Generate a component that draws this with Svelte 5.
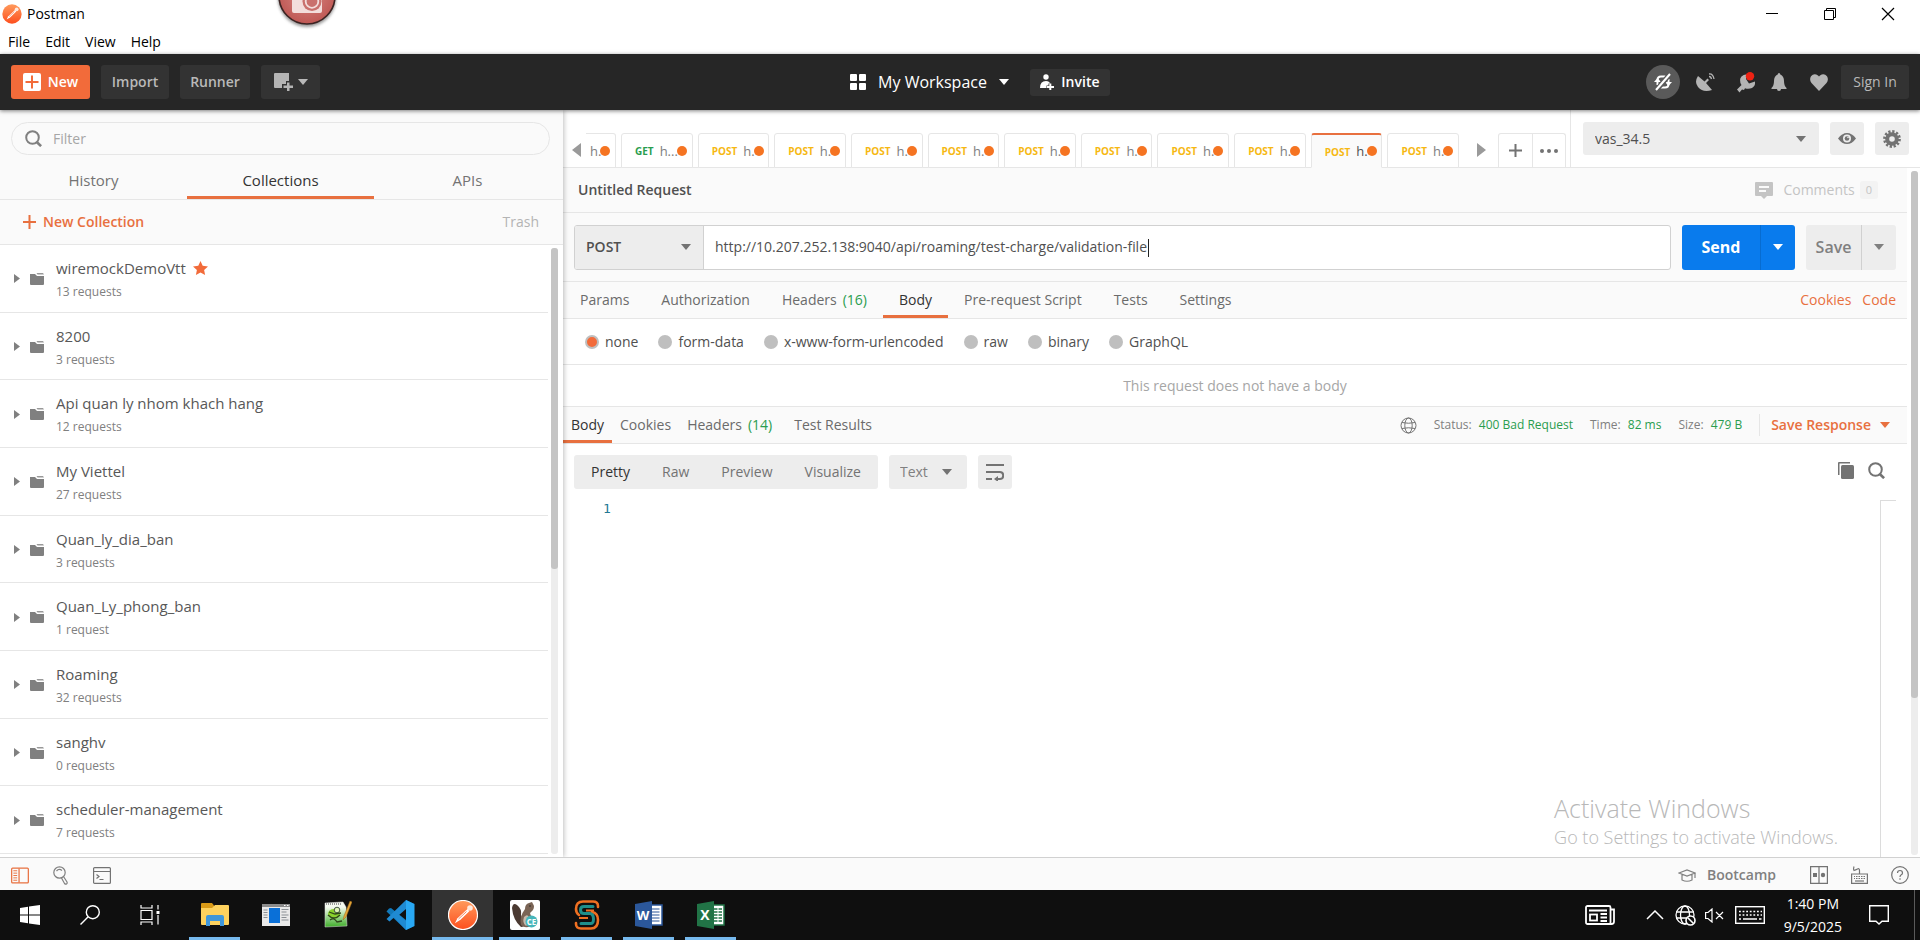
<script>
  const menus = ['File', 'Edit', 'View', 'Help'];
  const collections = [
    { name: 'wiremockDemoVtt', count: '13 requests', starred: true },
    { name: '8200', count: '3 requests' },
    { name: 'Api quan ly nhom khach hang', count: '12 requests' },
    { name: 'My Viettel', count: '27 requests' },
    { name: 'Quan_ly_dia_ban', count: '3 requests' },
    { name: 'Quan_Ly_phong_ban', count: '1 request' },
    { name: 'Roaming', count: '32 requests' },
    { name: 'sanghv', count: '0 requests' },
    { name: 'scheduler-management', count: '7 requests' }
  ];
  const openTabs = [
    { method: 'GET', title: 'h...' },
    ...Array.from({ length: 10 }, (_, i) => ({ method: 'POST', title: 'h.', active: i === 8 }))
  ];
  const requestTabs = [
    { label: 'Params' },
    { label: 'Authorization' },
    { label: 'Headers', count: '(16)' },
    { label: 'Body', active: true },
    { label: 'Pre-request Script' },
    { label: 'Tests' },
    { label: 'Settings' }
  ];
  const bodyTypes = ['none', 'form-data', 'x-www-form-urlencoded', 'raw', 'binary', 'GraphQL'];
  let bodyType = $state('none');
  let url = $state('http://10.207.252.138:9040/api/roaming/test-charge/validation-file');
</script>

{#snippet caret()}
  <svg class="caret" width="10" height="6" viewBox="0 0 10 6" aria-hidden="true"><path d="M0 0h10L5 6z" fill="currentColor" /></svg>
{/snippet}

{#snippet magnifier()}
  <svg width="17" height="17" viewBox="0 0 17 17" fill="none" stroke="currentColor" stroke-width="2" aria-hidden="true"><circle cx="7.5" cy="7.5" r="6.3" /><path d="M11.5 11.8l4.6 4.4" stroke-width="2.6" /></svg>
{/snippet}

{#snippet postmanLogo(size)}
  <svg width={size} height={size} viewBox="0 0 30 30" aria-hidden="true">
    <defs><linearGradient id="pm{size}" x1="0" y1="0" x2="0" y2="1"><stop offset="0" stop-color="#ff9a5c" /><stop offset="1" stop-color="#fd4f1e" /></linearGradient></defs>
    <circle cx="15" cy="15" r="14.5" fill="url(#pm{size})" stroke="#fff" stroke-width={size > 24 ? 1.2 : 0} />
    <circle cx="22" cy="8" r="2.8" fill="#ffe9dd" />
    <path d="M19.5 9l1.8 2.2-8.8 8.6-5.6 3.4 2.6-5z" fill="#fff" />
    <path d="M18.5 11.5l-8 7.5" stroke="#f26b3a" stroke-width=".8" />
  </svg>
{/snippet}

<div class="screen">
  <header class="titlebar">
    <div class="title-row">
      {@render postmanLogo(20)}
      <span class="app-name">Postman</span>
      <div class="win-controls">
        <button aria-label="Minimize"><svg width="14" height="14" viewBox="0 0 14 14"><path d="M1 6.5h12" stroke="#000" /></svg></button>
        <button aria-label="Restore"><svg width="14" height="14" viewBox="0 0 14 14" fill="none" stroke="#000"><path d="M1.500 3.500h9v9h-9zM3.500 3.500v-2h9v9h-2" /></svg></button>
        <button aria-label="Close"><svg width="14" height="14" viewBox="0 0 14 14" stroke="#000" stroke-width="1.2"><path d="M1 1l12 12M13 1L1 13" /></svg></button>
      </div>
    </div>
    <nav class="menus">
      {#each menus as m}<button>{m}</button>{/each}
    </nav>
    <svg class="recorder" width="64" height="34" viewBox="0 0 64 34" aria-hidden="true">
      <defs><radialGradient id="rec" cx=".5" cy=".45" r=".6"><stop offset="0" stop-color="#d98985" /><stop offset="1" stop-color="#bd5450" /></radialGradient>
      <filter id="soft" x="-20%" y="-20%" width="140%" height="150%"><feGaussianBlur stdDeviation="1.5" /></filter></defs>
      <circle cx="32" cy="-2" r="29" fill="#555" opacity=".6" filter="url(#soft)" />
      <circle cx="32" cy="-4" r="28" fill="url(#rec)" stroke="#3c2322" stroke-width="1.6" />
      <path d="M17 -8h30v19q0 2-2 2H19q-2 0-2-2z" fill="#f3dedc" />
      <circle cx="37" cy="1.500" r="9.500" fill="#c9716d" /><circle cx="37" cy="1.500" r="6.300" fill="none" stroke="#f3dedc" stroke-width="1.800" />
    </svg>
  </header>

  <div class="toolbar">
    <div class="tools">
      <button class="btn new"><svg width="18" height="18" viewBox="0 0 18 18"><rect width="18" height="18" rx="2" fill="#fff" /><path d="M9 2.500v13M2.500 9h13" stroke="#f26b3a" stroke-width="2" /></svg>New</button>
      <button class="btn import">Import</button>
      <button class="btn runner">Runner</button>
      <button class="btn window" aria-label="New window"><svg width="19" height="18" viewBox="0 0 19 18" fill="#b4b4b4"><path d="M1 0h14v8h-3v3H8v4H1q-1 0-1-1V1q0-1 1-1z" /><path d="M13 9.500h2.500v3H19V15h-3.500v3.500H13V15H9.500v-2.500H13z" /></svg>{@render caret()}</button>
    </div>
    <div class="workspace">
      <button class="ws-name"><svg width="16" height="16" viewBox="0 0 16 16" fill="#fff"><rect width="7" height="7" rx="1" /><rect x="9" width="7" height="7" rx="1" /><rect y="9" width="7" height="7" rx="1" /><rect x="9" y="9" width="7" height="7" rx="1" /></svg><span>My Workspace</span>{@render caret()}</button>
      <button class="btn invite"><svg width="15" height="16" viewBox="0 0 15 16" fill="#fff"><circle cx="6" cy="3" r="2.700" /><path d="M0 14q0-7 6-7 3.500 0 4 2.500H8.500V11.500H6.500V14z" /><path d="M9.300 9.500h2V12H14v2h-2.700v2.300h-2V14H7v-2h2.300z" /></svg>Invite</button>
    </div>
    <div class="account">
      <button class="sync" aria-label="Sync off"><svg width="20" height="20" viewBox="0 0 20 20" fill="none" stroke="#fff" stroke-width="2"><path d="M4.500 13V8q0-3.500 3.500-3.500h4.500M15.500 7v5q0 3.500-3.500 3.500H7.500" /><path d="M1 10l3.500-4L8 10zM12 10l3.500 4L19 10z" fill="#fff" stroke="none" /><path d="M3 18.500L17.500 1.500" stroke="#5a5a5a" stroke-width="5" /><path d="M3 18L17 2" /></svg></button>
      <button class="plain dish" aria-label="Capture"><svg width="20" height="19" viewBox="0 0 20 19" fill="#b4b4b4"><path d="M2 3Q-2 9 2 14q5 6 14 3L10 10l3-3-1.500-1.500L8.500 8.500z" /><path d="M13 1q4-.5 5 5M13 3.500q2 0 2.500 2.500" fill="none" stroke="#b4b4b4" stroke-width="1.300" /></svg></button>
      <button class="plain wrench" aria-label="Settings"><svg width="20" height="21" viewBox="0 0 20 21"><path d="M1 17.500L5.500 13Q2.500 8 5.500 4.500 8 2 11 2.500L10 7l3 4.500 6-2q.5 4.500-3 6.500-3.500 1.500-7 .3L8 18l-2-.5L3.500 20.500z" fill="#b4b4b4" /><circle cx="14" cy="4.200" r="4.200" fill="#ed2213" /></svg></button>
      <button class="plain bell" aria-label="Notifications"><svg width="16" height="18" viewBox="0 0 16 18" fill="#b4b4b4"><path d="M8 0q1.200 0 1.300 1.500Q13 3 13 8q0 5 2.500 7v1H.5v-1Q3 13 3 8q0-5 3.700-6.500Q6.800 0 8 0z" /><path d="M6 16h4q0 2-2 2t-2-2z" /></svg></button>
      <button class="plain heart" aria-label="Favorites"><svg width="18" height="17" viewBox="0 0 18 17" fill="#b4b4b4"><path d="M9 17L1.500 9Q-1 5.500 1 2.300 4-1.500 8 1.500L9 2.500l1-1q4-3 7 .8 2 3.200-.5 6.700z" /></svg></button>
      <button class="btn signin">Sign In</button>
    </div>
  </div>

  <div class="main">
    <aside class="sidebar">
      <div class="filter-wrap">
        <label class="filter">{@render magnifier()}<input type="text" placeholder="Filter" aria-label="Filter" /></label>
      </div>
      <nav class="side-tabs">
        <button>History</button><button class="active">Collections</button><button>APIs</button>
      </nav>
      <div class="side-actions">
        <button class="new-col"><svg width="13" height="14" viewBox="0 0 13 14"><path d="M6.500 0v14M0 7h13" stroke="#e8703f" stroke-width="2" /></svg>New Collection</button>
        <button class="trash">Trash</button>
      </div>
      <div class="list-wrap">
        <ul class="list">
          {#each collections as c}
            <li>
              <svg class="tri" width="6" height="9" viewBox="0 0 6 9"><path d="M0 0l6 4.500L0 9z" fill="#808080" /></svg>
              <svg class="folder" width="14" height="12" viewBox="0 0 14 12" fill="#808080"><path d="M0 1h5l2 2h7v8q0 1-1 1H1q-1 0-1-1z" /><path d="M6.500 0H13l1 1.500H7.500z" opacity=".8" /></svg>
              <div class="info">
                <div class="name">{c.name}{#if c.starred}<svg width="15" height="14" viewBox="0 0 15 14"><path d="M7.500 0l2.200 4.700 5.300.7-3.900 3.500 1 5.100-4.600-2.500L2.900 14l1-5.100L0 5.400l5.300-.7z" fill="#f26b3a" /></svg>{/if}</div>
                <div class="count">{c.count}</div>
              </div>
            </li>
          {/each}
        </ul>
        <div class="track"><div class="thumb side-thumb"></div></div>
      </div>
    </aside>

    <section class="work">
      <div class="tabbar">
        <div class="tabs-area">
          <button class="arrow left" aria-label="Previous tabs"><svg width="9" height="14" viewBox="0 0 9 14"><path d="M9 0v14L0 7z" fill="#9a9a9a" /></svg></button>
          <div class="strip">
            <button class="tab cut"><span class="tab-title">h.</span><i class="dot"></i></button>
            {#each openTabs as t}
              <button class="tab" class:active={t.active} class:get={t.method === 'GET'}><b>{t.method}</b><span class="tab-title">{t.title}</span><i class="dot"></i></button>
            {/each}
          </div>
          <button class="arrow right" aria-label="Next tabs"><svg width="9" height="14" viewBox="0 0 9 14"><path d="M0 0v14l9-7z" fill="#9a9a9a" /></svg></button>
          <div class="tab-tools">
            <button aria-label="Add tab"><svg width="13" height="13" viewBox="0 0 13 13"><path d="M6.500 0v13M0 6.500h13" stroke="#737373" stroke-width="2" /></svg></button>
            <button aria-label="More"><svg width="18" height="4" viewBox="0 0 18 4" fill="#737373"><circle cx="2" cy="2" r="2" /><circle cx="9" cy="2" r="2" /><circle cx="16" cy="2" r="2" /></svg></button>
          </div>
        </div>
        <div class="env">
          <div class="picker env-picker"><select aria-label="Environment"><option>vas_34.5</option></select>{@render caret()}</div>
          <button class="sq" aria-label="Quick look"><svg width="18" height="11" viewBox="0 0 18 11"><path d="M0 5.500Q4 0 9 0t9 5.500Q14 11 9 11T0 5.500z" fill="#737373" /><circle cx="9" cy="5.500" r="4" fill="#ededed" /><circle cx="9" cy="5.500" r="2.300" fill="#737373" /><circle cx="10" cy="4.500" r=".8" fill="#ededed" /></svg></button>
          <button class="sq" aria-label="Manage environments"><svg width="18" height="18" viewBox="0 0 18 18"><circle cx="9" cy="9" r="7.400" fill="none" stroke="#737373" stroke-width="3" stroke-dasharray="2.2 1.675" /><circle cx="9" cy="9" r="4.800" fill="none" stroke="#737373" stroke-width="4" /></svg></button>
        </div>
      </div>

      <div class="body-wrap">
        <div class="content">
          <div class="req-head">
            <h1>Untitled Request</h1>
            <button class="comments"><svg width="18" height="17" viewBox="0 0 18 17"><path d="M1 0h16q1 0 1 1v12q0 1-1 1h-5l-3 3-3-3H1q-1 0-1-1V1q0-1 1-1z" fill="#c4c4c4" /><path d="M4 5h10M4 9h7" stroke="#fafafa" stroke-width="1.800" /></svg>Comments <span class="badge">0</span></button>
          </div>
          <div class="req-line">
            <div class="url-group">
              <div class="picker method"><select aria-label="Method"><option>POST</option></select>{@render caret()}</div>
              <div class="url"><input type="text" aria-label="Request URL" bind:value={url} /><span class="cursor"></span></div>
            </div>
            <div class="split send"><button>Send</button><button class="more" aria-label="Send options">{@render caret()}</button></div>
            <div class="split save"><button>Save</button><button class="more" aria-label="Save options">{@render caret()}</button></div>
          </div>
          <nav class="req-tabs">
            {#each requestTabs as t}
              <button class:active={t.active}>{t.label}{#if t.count}<span class="green">{t.count}</span>{/if}</button>
            {/each}
            <div class="links"><a href="#cookies">Cookies</a><a href="#code">Code</a></div>
          </nav>
          <div class="types">
            {#each bodyTypes as b}
              <label><input type="radio" name="body-type" value={b} bind:group={bodyType} />{b}</label>
            {/each}
          </div>
          <p class="no-body">This request does not have a body</p>
          <div class="resp-tabs">
            <button class="active">Body</button><button>Cookies</button><button>Headers<span class="green">(14)</span></button><button class="results">Test Results</button>
            <div class="meta">
              <svg class="globe" width="17" height="17" viewBox="0 0 17 17" fill="none" stroke="#737373"><circle cx="8.500" cy="8.500" r="7.500" /><ellipse cx="8.500" cy="8.500" rx="3.700" ry="7.500" /><path d="M2 5.500q6.500 1.500 13 0M2 11.500q6.500-1.500 13 0" /></svg>
              <span>Status: <em>400 Bad Request</em></span>
              <span>Time: <em>82 ms</em></span>
              <span>Size: <em>479 B</em></span>
              <button class="save-resp">Save Response{@render caret()}</button>
            </div>
          </div>
          <div class="view-bar">
            <div class="modes"><button class="active">Pretty</button><button>Raw</button><button>Preview</button><button>Visualize</button></div>
            <div class="picker fmt"><select aria-label="Format"><option>Text</option></select>{@render caret()}</div>
            <button class="sq wrap" aria-label="Wrap lines"><svg width="18" height="18" viewBox="0 0 18 18" fill="none" stroke="#737373" stroke-width="2"><path d="M0 2h18M0 9h14q3.200 0 3.200 3.500T14 16h-3M0 16h6" /><path d="M8 16l4-3v6z" fill="#737373" stroke="none" /></svg></button>
            <div class="view-tools">
              <button class="plain" aria-label="Copy"><svg width="16" height="17" viewBox="0 0 16 17" fill="#737373"><path d="M0 1q0-1 1-1h11v1.500H1.500V13H0z" /><rect x="3" y="3" width="13" height="14" rx="1.500" /></svg></button>
              <button class="plain" aria-label="Search">{@render magnifier()}</button>
            </div>
          </div>
          <div class="editor"><code>1</code><div class="ruler"></div></div>
        </div>
        <div class="track right-track"><div class="thumb right-thumb"></div></div>
      </div>
      <div class="watermark"><div>Activate Windows</div><p>Go to Settings to activate Windows.</p></div>
    </section>
  </div>

  <footer class="statusbar">
    <button class="plain" aria-label="Sidebar"><svg width="18" height="17" viewBox="0 0 19 17" fill="none" stroke="#e8703f"><rect x=".700" y=".700" width="17.600" height="15.600" rx="1" stroke-width="1.300" /><path d="M8.500 1v15" stroke-width="1.300" /><path d="M2.500 3.500h4M2.500 6h4M2.500 8.500h4M2.500 11h4M2.500 13.500h4" /></svg></button>
    <button class="plain" aria-label="Find"><svg width="16" height="19" viewBox="0 0 16 19" fill="none" stroke="#808080" stroke-width="1.200"><circle cx="6.500" cy="6.500" r="5.700" /><path d="M3.500 5q2.500-3 5.500-.5M8.500 12l3 5.500q1 1 2 .5 1-.8.500-2L10.500 10.500" /></svg></button>
    <button class="plain" aria-label="Console"><svg width="18" height="17" viewBox="0 0 18 17" fill="none" stroke="#737373" stroke-width="1.200"><rect x=".600" y=".600" width="16.800" height="15.800" rx="1" /><path d="M1 4.500h16M3.500 7.500L6 9.500l-2.500 2M6.500 12.500h4" /></svg></button>
    <div class="status-right">
      <button class="plain boot"><svg width="18" height="13" viewBox="0 0 18 13" fill="none" stroke="#808080" stroke-width="1.200"><path d="M1 4l8-3 8 3-8 3zM4 5.500V11q5 2.500 10 0V5.500M17 4v5" /></svg>Bootcamp</button>
      <button class="plain" aria-label="Layout"><svg width="18" height="18" viewBox="0 0 18 18" fill="none" stroke="#737373" stroke-width="1.200"><path d="M.600.600h16.800v16.800H.600zM9 1v16" /><rect x="3" y="7" width="4" height="4" fill="#737373" stroke="none" /><circle cx="13" cy="9" r="2.200" fill="#737373" stroke="none" /></svg></button>
      <button class="plain" aria-label="Shortcuts"><svg width="17" height="18" viewBox="0 0 17 18" fill="none" stroke="#737373" stroke-width="1.200"><path d="M.600 8h15.800v9.400H.600zM8.500 8V4.500Q8.500 2 6.500 3T3 4.500q-1-1 0-4M3 10.500h11M3 12.500h11" /><path d="M4 15h9" /><path d="M4 11.500h10" stroke="#fafafa" stroke-dasharray="1 1.500" stroke-width="3" /></svg></button>
      <button class="plain" aria-label="Help"><svg width="18" height="18" viewBox="0 0 18 18" fill="none" stroke="#737373" stroke-width="1.200"><circle cx="9" cy="9" r="8.300" /><path d="M6.500 7q0-2.500 2.500-2.500T11.500 7q0 1.200-1.500 2-1 .6-1 2M9 12.300v1.500" /></svg></button>
    </div>
  </footer>

  <nav class="taskbar">
    <button class="sys" aria-label="Start"><svg width="20" height="20" viewBox="0 0 20 20" fill="#fff"><path d="M0 3l8-1.200V9.500H0zM9 1.600L20 0v9.500H9zM0 10.500h8v7.700L0 17zM9 10.500h11V20L9 18.400z" /></svg></button>
    <button class="sys" aria-label="Search"><svg width="20" height="20" viewBox="0 0 20 20" fill="none" stroke="#fff" stroke-width="1.400"><circle cx="12.800" cy="7.200" r="6.500" /><path d="M8.200 11.800L.5 19.500" /></svg></button>
    <button class="sys view" aria-label="Task view"><svg width="20" height="20" viewBox="0 0 20 20" fill="none" stroke="#fff" stroke-width="1.200"><path d="M1 0v3h11V0M1 20v-3h11v3M1 5.500h11v9H1zM18 0v4.500M18 10v9.500" /><rect x="16.500" y="6" width="3" height="3" fill="#fff" stroke="none" /></svg></button>
    <button class="app open" aria-label="File Explorer"><svg width="28" height="24" viewBox="0 0 28 24"><path d="M0 1q0-1 1-1h10l2 2.500V5H0z" fill="#d99a17" /><path d="M0 5h11l3-3h13q1 0 1 1v18q0 1-1 1H1q-1 0-1-1z" fill="#fdd15d" /><path d="M5 23V14q0-2 2-2h14q2 0 2 2v9h-4v-5H9v5z" fill="#3f96d9" /></svg></button>
    <button class="app" aria-label="Window tool"><svg width="28" height="22" viewBox="0 0 28 22"><path d="M0 0h28v22H0z" fill="#e9e9e9" /><path d="M0 0h28v3H0z" fill="#8b8b8b" /><path d="M22 1.500h1.500M25 1.500h1.500" stroke="#fff" /><path d="M7 4h11v15H7z" fill="#0a70d8" /><path d="M1.500 6h4M1.500 8.500h4M1.500 11h4M1.500 13.500h4M19.500 5.500h7M19.500 8h5M19.500 11h7M19.500 13.500h5M19.500 16h7" stroke="#8a8f94" /></svg></button>
    <button class="app" aria-label="Notepad++"><svg width="28" height="28" viewBox="0 0 28 28"><defs><linearGradient id="npp" x1="0" y1="0" x2="0" y2="1"><stop offset=".2" stop-color="#f5faf0" /><stop offset="1" stop-color="#3fae2a" /></linearGradient></defs><path d="M1 2l18-1 3 5 1 19-22 1z" fill="url(#npp)" stroke="#ddd" stroke-width=".5" /><path d="M2 3h16" stroke="#999" stroke-width="2" stroke-dasharray="1 1" /><ellipse cx="10" cy="13" rx="6" ry="5" fill="#8bd22d" /><circle cx="13" cy="9" r="2.800" fill="#dff3b7" stroke="#454" /><path d="M4 14q6 6 12 0M6 19q4-3 7 2l5-1M5 11l6 2 6-1" fill="none" stroke="#30471c" stroke-width="1.300" /><path d="M19 19l1-4 6-15 2 1-6 15z" fill="#e5a53a" stroke="#9a6a18" stroke-width=".5" /></svg></button>
    <button class="app" aria-label="Visual Studio Code"><svg width="30" height="30" viewBox="0 0 30 30"><path d="M21 0l8 4v22l-8 4L1.500 11.500 4 8.500 6 8l15 12z" fill="#1179bb" /><path d="M21 30L9 17.500 4.500 21.500 1.500 19 21 0v9L14 15l7 6z" fill="#1f8ad2" /><path d="M21 0l8.500 4v22L21 30z" fill="#29a8f3" /></svg></button>
    <button class="app open current" aria-label="Postman">{@render postmanLogo(30)}</button>
    <button class="app open" aria-label="DBeaver"><svg width="30" height="30" viewBox="0 0 30 30"><rect width="30" height="30" rx="2" fill="#fff" /><path d="M2 8q1-6 5-3 5 4 4 10l3 8q1 4-3 4Q3 20 2 8z" fill="#4b3a32" /><path d="M15 9q0-5 4-6l3-1 1 2q2 2 0 6l-3 3 2 6-1 7q-6 3-10-1-2-8 4-16z" fill="#7a6455" /><path d="M14 17q4-4 5 1 0 6-3 8-4-3-2-9z" fill="#c8b8aa" /><circle cx="20" cy="6" r=".800" fill="#222" /><circle cx="21.500" cy="21.500" r="6" fill="#46b5ba" /><text x="21.500" y="24.500" text-anchor="middle" font-size="8" font-weight="700" fill="#fff" font-family="Open Sans, sans-serif">CE</text></svg></button>
    <button class="app open" aria-label="Smart terminal"><svg width="26" height="30" viewBox="0 0 26 30" fill="none"><path d="M24 7V6q0-4.500-5-4.500H9Q2 1.500 2 9q0 4 3 6M18 12q6 1 6 8 0 8.500-7 8.500H7q-5 0-5-4.500v-1" stroke="#ef7022" stroke-width="2.600" stroke-linecap="round" /><path d="M19 6.500H10Q6.500 6.500 6.500 10t3.500 3.500h6Q19.500 14 19.500 19T16 23.500H7" stroke="#1f8f8b" stroke-width="3" stroke-linecap="round" /><path d="M20 10.500H12M5 18h9" stroke="#ef7022" stroke-width="1.800" /></svg></button>
    <button class="app open" aria-label="Word"><svg width="28" height="28" viewBox="0 0 28 28"><path d="M15 4h12v20H15z" fill="#fff" stroke="#2b579a" stroke-width="1.500" /><path d="M17 8h7.500M17 11h7.500M17 14h7.500M17 17h7.500M17 20h7.500" stroke="#2b579a" stroke-width="1.200" /><path d="M0 3l17-3v28L0 25z" fill="#2b579a" /><text x="8" y="19" text-anchor="middle" font-size="13" font-weight="700" fill="#fff" font-family="Open Sans, sans-serif">W</text></svg></button>
    <button class="app open" aria-label="Excel"><svg width="28" height="28" viewBox="0 0 28 28"><path d="M15 4h12v20H15z" fill="#fff" stroke="#217346" stroke-width="1.500" /><path d="M17 8h8M17 11h8M17 14h8M17 17h8M17 20h8" stroke="#217346" stroke-width="1.500" /><path d="M21 6v16" stroke="#fff" /><path d="M0 3l17-3v28L0 25z" fill="#217346" /><text x="8" y="19" text-anchor="middle" font-size="14" font-weight="700" fill="#fff" font-family="Open Sans, sans-serif">X</text></svg></button>
    <div class="tray">
      <svg width="30" height="20" viewBox="0 0 30 20" fill="none" stroke="#fff" stroke-width="1.800"><rect x="1" y="1" width="24.500" height="18" rx="1.500" /><path d="M25.500 4.500H29v12q0 2.500-2.500 2.500h-3M4 5.500h18M15.500 9H22M15.500 12.500H22M15.500 16H22" /><rect x="5" y="9.500" width="7" height="6" /></svg>
      <svg class="up" width="18" height="10" viewBox="0 0 18 10" fill="none" stroke="#fff" stroke-width="1.500"><path d="M1 9l8-8 8 8" /></svg>
      <svg class="net" width="21" height="21" viewBox="0 0 21 21" fill="none" stroke="#fff" stroke-width="1.300"><circle cx="10" cy="10" r="9" /><ellipse cx="10" cy="10" rx="4.500" ry="9" /><path d="M1 7h18M1 13h18" /><circle cx="15.500" cy="15.500" r="4.500" fill="#0f0f0f" stroke-width="1.600" /><path d="M12.500 12.500l6 6" stroke-width="1.600" /></svg>
      <svg class="vol" width="19" height="15" viewBox="0 0 19 15" fill="none" stroke="#fff" stroke-width="1.200"><path d="M.600 4.500H3L7 1v13L3 10.500H.600zM11 4l7 7M18 4l-7 7" /></svg>
      <svg class="kbd" width="30" height="18" viewBox="0 0 30 18" fill="none" stroke="#fff" stroke-width="1.400"><rect x=".700" y=".700" width="28.600" height="16.600" /><path d="M4 5.500h23M4 9h23" stroke-dasharray="1.800 1.800" /><path d="M4 13h2M8 13h14M24 13h2.500" /></svg>
      <time class="clock"><span>1:40 PM</span><span>9/5/2025</span></time>
      <svg width="20" height="20" viewBox="0 0 20 20" fill="none" stroke="#fff" stroke-width="1.400"><path d="M.700.700h18.600v15.600H13L10 19l-3-2.700H.700z" /></svg>
      <i class="peek"></i>
    </div>
  </nav>
</div>

<style>
  :global(body) { margin: 0; overflow: hidden; }
  .screen { height: 100vh; display: flex; flex-direction: column; font: 14px/20px 'Open Sans', sans-serif; color: #505050; background: #fff; }
  .screen * { box-sizing: border-box; }
  button, select, input { font: inherit; color: inherit; border: 0; padding: 0; margin: 0; background: none; outline: 0; }
  button { display: flex; align-items: center; justify-content: center; white-space: nowrap; }
  svg { flex: none; display: block; }
  .green, em { color: #2a9d4f; font-style: normal; }

  .titlebar { height: 54px; flex: none; color: #000; position: relative; display: flex; flex-direction: column; }
  .title-row { height: 28px; display: flex; align-items: center; padding-left: 2px; gap: 5px; }
  .win-controls { margin-left: auto; display: flex; padding-right: 3px; }
  .win-controls button { width: 58px; height: 28px; }
  .menus { display: flex; gap: 15px; padding: 5px 8px; }
  .menus button { line-height: 18px; }
  .recorder { position: absolute; left: 275px; top: 0; }

  .toolbar { height: 56px; flex: none; background: #262626; display: grid; grid-template-columns: 1fr auto 1fr; align-items: center; padding: 0 11px; color: #b9b9b9; box-shadow: 0 1px 4px rgba(0, 0, 0, .5); position: relative; z-index: 2; }
  .tools { display: flex; gap: 11px; }
  .btn { height: 34px; border-radius: 3px; background: #333; font-weight: 600; }
  .new { width: 79px; background: #f26b3a; color: #fff; gap: 7px; }
  .import { width: 68px; }
  .runner { width: 70px; }
  .window { width: 59px; gap: 5px; }
  .workspace { display: flex; gap: 21px; align-items: center; color: #fff; margin-left: 40px; }
  .ws-name { gap: 12px; font-size: 16px; }
  .invite { height: 27px; width: 80px; gap: 6px; }
  .account { display: flex; justify-content: flex-end; align-items: center; }
  .sync { width: 34px; height: 34px; border-radius: 50%; background: #5a5a5a; }
  .dish { margin-left: 16px; }
  .wrench { margin-left: 20px; }
  .bell { margin-left: 15px; }
  .heart { margin-left: 23px; }
  .signin { width: 68px; margin-left: 13px; font-weight: 400; }

  .main { flex: 1; min-height: 0; display: flex; }
  .sidebar { width: 563px; flex: none; background: #fafafa; display: flex; flex-direction: column; box-shadow: 1px 0 5px rgba(0, 0, 0, .25); position: relative; z-index: 1; }
  .filter-wrap { padding: 12px 13px 0 11px; }
  .filter { height: 33px; border: 1px solid #e6e6e6; border-radius: 17px; display: flex; align-items: center; gap: 11px; padding: 0 13px; color: #808080; }
  .filter input { flex: 1; min-width: 0; }
  input::placeholder { color: #a6a6a6; opacity: 1; }
  .side-tabs { display: grid; grid-template-columns: 1fr 1fr 1fr; height: 45px; padding: 7px 2px 0 0; border-bottom: 1px solid #e6e6e6; font-size: 15px; color: #737373; }
  .side-tabs button { border-bottom: 3px solid transparent; padding-top: 1px; }
  .side-tabs .active { color: #333; border-bottom-color: #e8703f; }
  .side-actions { height: 45px; border-bottom: 1px solid #e6e6e6; display: flex; justify-content: space-between; padding: 0 24px 0 23px; color: #b4b4b4; }
  .new-col { color: #e8703f; font-weight: 600; gap: 7px; }
  .list-wrap { flex: 1; min-height: 0; background: #fff; display: flex; padding: 0 5px 3px 0; gap: 3px; }
  .list { flex: 1; margin: 0; padding: 0; list-style: none; display: flex; flex-direction: column; }
  li { flex: 1; border-bottom: 1px solid #e6e6e6; display: flex; align-items: center; padding: 1px 0 0 14px; }
  .folder { margin: 0 12px 0 10px; }
  .name { font-size: 15px; line-height: 22px; color: #585858; display: flex; gap: 7px; align-items: center; }
  .count { font-size: 12px; line-height: 18px; margin-top: 4px; color: #808080; }
  .track { width: 7px; margin-top: 3px; border-radius: 3px; background: #ededed; flex: none; }
  .thumb { background: #c4c4c4; border-radius: 3px; }
  .side-thumb { height: 53%; }

  .work { flex: 1; min-width: 0; display: flex; flex-direction: column; position: relative; }
  .tabbar { height: 58px; flex: none; display: flex; border-bottom: 1px solid #e6e6e6; }
  .tabs-area { flex: 1; min-width: 0; display: flex; align-items: flex-end; padding: 0 4px 0 9px; }
  .arrow { height: 34px; width: 14px; }
  .arrow.left { justify-content: flex-start; }
  .arrow.right { margin: 0 10px 0 15px; }
  .strip { flex: 1; min-width: 0; display: flex; gap: 5px; margin-bottom: -1px; }
  .tab { flex: 1 1 0; min-width: 0; height: 35px; border: 1px solid #e6e6e6; border-radius: 3px 3px 0 0; font-size: 13px; color: #808080; padding-left: 13px; background: #fff; justify-content: flex-start; }
  .tab.cut { flex: 0 0 30px; border-left: 0; padding-left: 4px; border-radius: 0 3px 0 0; }
  .tab b { font-size: 10px; color: #f6b812; margin: 1px 6px 0 0; }
  .tab.get b { color: #2a9d4f; }
  .tab.active { background: #fafafa; border-top: 2px solid #e8703f; border-bottom-color: #fafafa; color: #505050; }
  .dot { width: 10px; height: 10px; border-radius: 50%; background: #f57422; flex: none; margin-left: -1px; }
  .tab-tools { display: flex; border: 1px solid #e6e6e6; border-bottom: 0; border-radius: 3px 3px 0 0; height: 34px; }
  .tab-tools button { width: 33px; }
  .tab-tools button + button { border-left: 1px solid #e6e6e6; }
  .env { width: 350px; flex: none; border-left: 1px solid #e6e6e6; display: flex; gap: 11px; padding: 12px 11px 0 12px; }
  .picker { display: grid; align-items: center; background: #ededed; border-radius: 3px; }
  .picker select { grid-area: 1 / 1; appearance: none; width: 100%; height: 100%; }
  .picker .caret { grid-area: 1 / 1; justify-self: end; pointer-events: none; color: #737373; }
  .env-picker { flex: 1; height: 33px; }
  .env-picker select { padding-left: 12px; }
  .env-picker .caret { margin-right: 13px; }
  .sq { width: 34px; height: 33px; border-radius: 3px; background: #ededed; }

  .body-wrap { flex: 1; min-height: 0; display: flex; padding-right: 2px; gap: 4px; }
  .content { flex: 1; min-width: 0; display: flex; flex-direction: column; }
  .req-head { height: 45px; background: #fafafa; border-bottom: 1px solid #e6e6e6; display: flex; justify-content: space-between; align-items: center; padding: 0 29px 0 15px; }
  h1 { font-size: 14px; line-height: 20px; font-weight: 600; margin: 0; }
  .comments { color: #c4c4c4; gap: 10px; }
  .badge { font-size: 11px; line-height: 18px; padding: 0 6px; background: #f3f3f3; border-radius: 3px; margin-left: -5px; }
  .req-line { height: 69px; background: #fafafa; border-bottom: 1px solid #e6e6e6; display: flex; gap: 11px; align-items: center; padding: 0 11px; }
  .url-group { flex: 1; display: flex; height: 45px; border: 1px solid #d1d1d1; border-radius: 3px; background: #fff; }
  .method { width: 129px; border-right: 1px solid #d1d1d1; border-radius: 2px 0 0 2px; font-weight: 600; }
  .method select { padding-left: 11px; }
  .method .caret { margin-right: 12px; }
  .url { flex: 1; display: flex; position: relative; }
  .url input { flex: 1; padding: 0 11px; }
  .cursor { position: absolute; left: 444px; top: 13px; width: 1px; height: 18px; background: #222; }
  .split { display: flex; height: 45px; border-radius: 3px; font-size: 16px; font-weight: 600; background: #ededed; color: #808080; }
  .send { background: #097bed; color: #fff; font-weight: 700; }
  .send button:first-child { width: 78px; }
  .save button:first-child { width: 55px; }
  .split .more { width: 35px; border-left: 1px solid rgba(0, 0, 0, .12); }
  .req-tabs, .resp-tabs { height: 37px; background: #fafafa; border-bottom: 1px solid #e6e6e6; display: flex; color: #6b6b6b; }
  .req-tabs { padding-left: 1px; }
  .req-tabs button { padding: 3px 16px 0; border-bottom: 3px solid transparent; }
  .req-tabs .active, .resp-tabs .active { color: #333; border-bottom-color: #e8703f; }
  .green { margin-left: 6px; }
  .links { margin-left: auto; display: flex; gap: 11px; align-items: center; padding-right: 11px; }
  a { color: #e8703f; text-decoration: none; }
  .types { height: 46px; border-bottom: 1px solid #e6e6e6; display: flex; align-items: center; gap: 20px; padding-left: 22px; }
  .types label { display: flex; align-items: center; gap: 6px; }
  .types input { appearance: none; width: 14px; height: 14px; border-radius: 50%; background: #bfbfbf; }
  .types input:checked { background: #f26b3a; border: 2px solid #bfbfbf; }
  .no-body { height: 42px; margin: 0; line-height: 41px; text-align: center; color: #a6a6a6; border-bottom: 1px solid #e6e6e6; }
  .resp-tabs button { padding: 3px 8px 0; border-bottom: 3px solid transparent; }
  .resp-tabs .results { margin-left: 6px; }
  .meta { margin-left: auto; display: flex; align-items: center; gap: 17px; font-size: 12px; color: #808080; }
  .meta em { margin-left: 4px; }
  .resp-tabs .meta .save-resp { font-size: 14px; font-weight: 600; color: #e8703f; border: 0; border-left: 1px solid #e6e6e6; height: 22px; padding: 0 17px 0 11px; gap: 9px; }
  .view-bar { display: flex; padding: 11px 22px 0 11px; gap: 11px; color: #737373; }
  .modes { display: flex; background: #ededed; border-radius: 3px; height: 34px; padding: 0 1px; }
  .modes button { padding: 0 16px; }
  .modes .active { color: #333; }
  .fmt { width: 78px; height: 34px; color: #808080; }
  .fmt select { padding-left: 11px; }
  .fmt .caret { margin-right: 15px; }
  .view-bar .wrap { height: 34px; }
  .view-tools { margin-left: auto; display: flex; gap: 14px; align-items: center; padding-bottom: 3px; }
  .editor { flex: 1; display: flex; justify-content: space-between; padding: 11px 11px 0 40px; }
  code { font: 13px/18px 'DejaVu Sans Mono', monospace; color: #237893; }
  .ruler { width: 16px; border: 1px solid #dcdcdc; border-width: 1px 0 0 1px; }
  .right-track { margin-bottom: 2px; }
  .right-thumb { height: 77%; }
  .watermark { position: absolute; right: 82px; bottom: 7px; color: #b8b8b8; font-size: 25px; font-weight: 300; line-height: 32px; pointer-events: none; }
  .watermark p { margin: 0; font-size: 18px; line-height: 26px; }

  .statusbar { height: 33px; flex: none; background: #fafafa; border-top: 1px solid #d1d1d1; display: flex; align-items: center; padding: 2px 11px 0; gap: 24px; position: relative; z-index: 2; }
  .status-right { margin-left: auto; display: flex; gap: 23px; align-items: center; }
  .boot { gap: 11px; font-weight: 600; color: #808080; margin-right: 11px; }

  .taskbar { height: 50px; flex: none; background: #0f0f0f; display: flex; }
  .sys { width: 60px; }
  .sys.view { width: 63px; padding-right: 3px; }
  .app { width: 62px; border-bottom: 3px solid transparent; padding-top: 3px; }
  .open { width: 51px; margin: 0 5px 0 6px; border-bottom-color: #76b9ed; }
  .current { width: 61px; margin: 0 0 0 1px; background: #333; }
  .tray { margin-left: auto; display: flex; align-items: center; color: #fff; }
  .up { margin-left: 31px; }
  .net { margin-left: 11px; }
  .vol { margin-left: 9px; }
  .kbd { margin-left: 11px; }
  .clock { display: flex; flex-direction: column; align-items: center; line-height: 23px; margin: 0 27px 0 19px; }
  .peek { width: 1px; align-self: stretch; background: #5a5a5a; margin: 0 5px 0 25px; }
</style>
